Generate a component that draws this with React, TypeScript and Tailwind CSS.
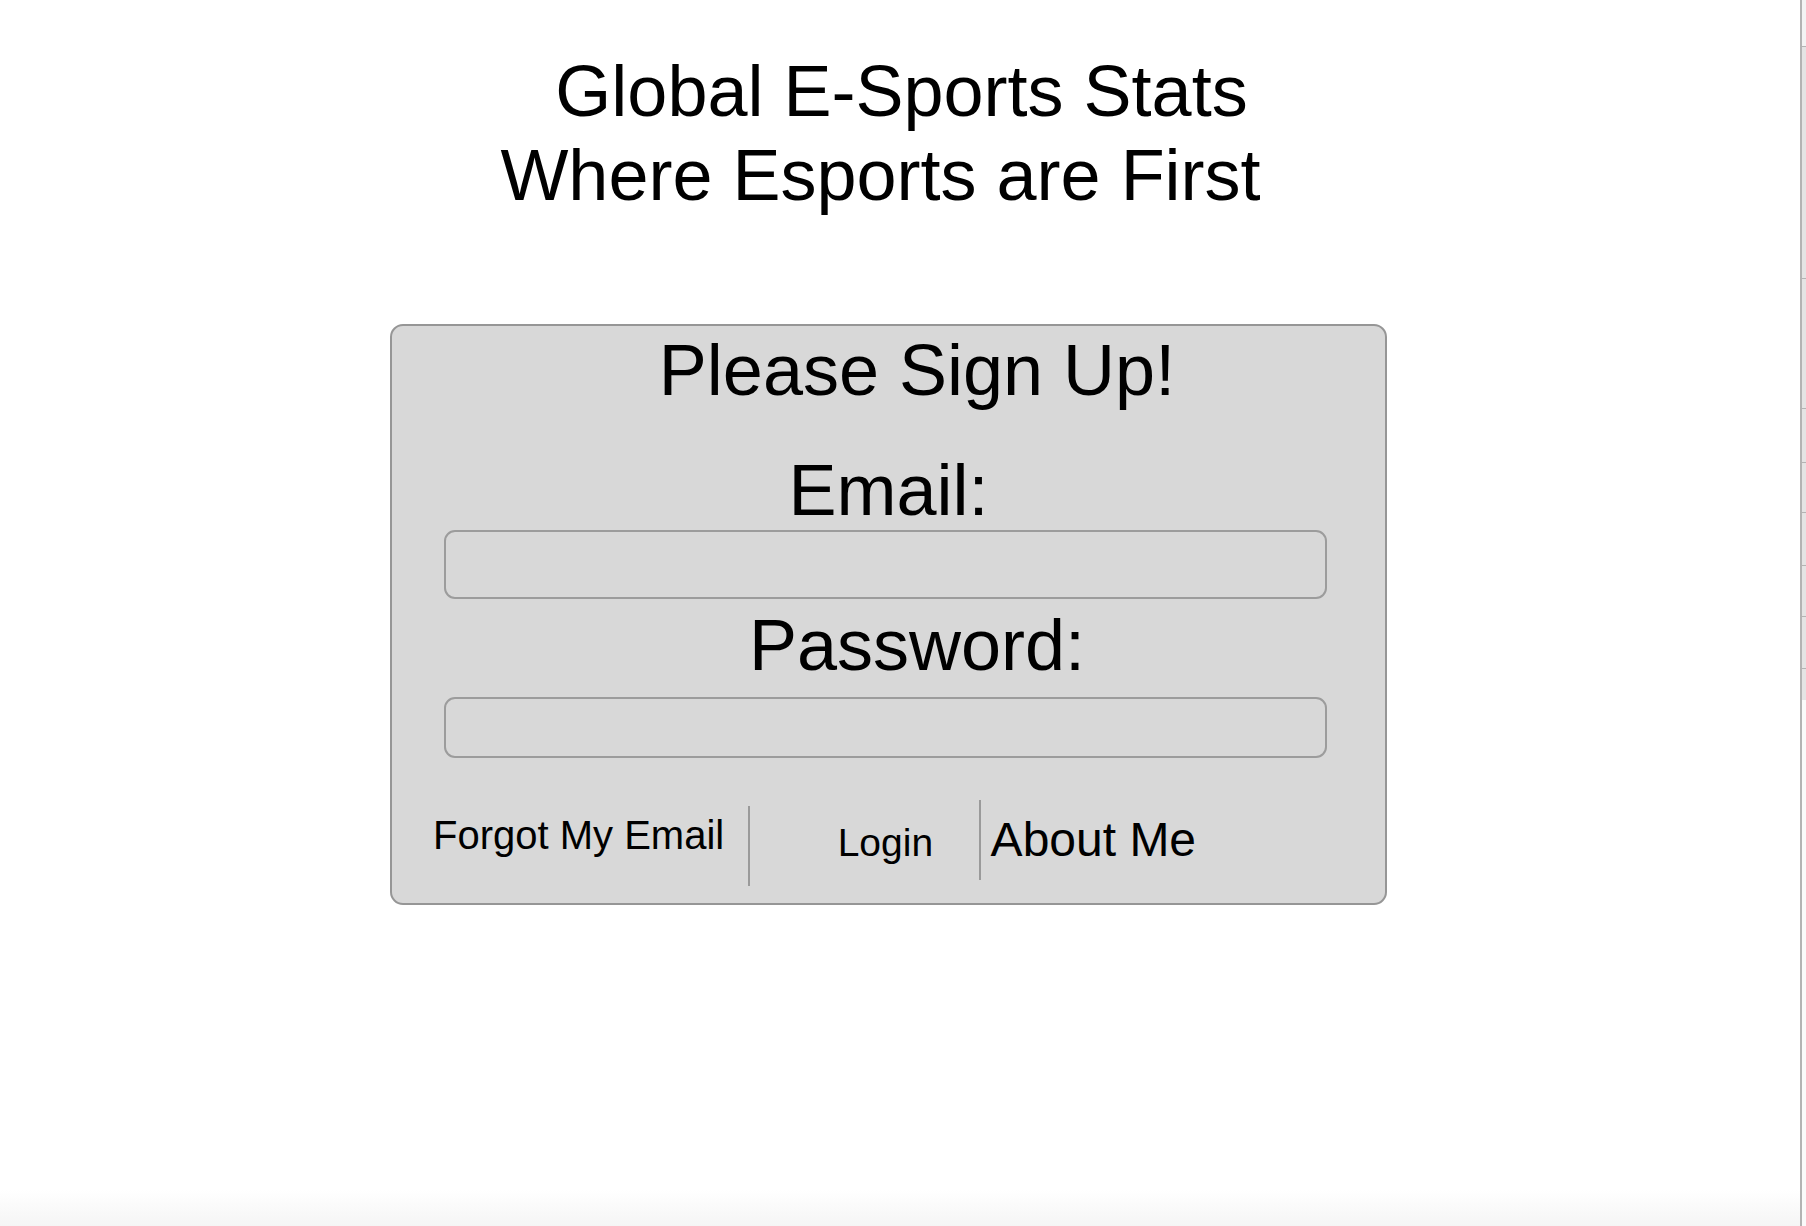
import React from "react";

export default function App() {
  const ticks = [46, 278, 408, 462, 512, 565, 616, 668];
  return (
    <div className="flex w-[1806px] h-[1226px] bg-white text-black font-['Liberation_Sans','Helvetica',Arial,sans-serif] overflow-hidden">
      <div className="flex flex-col w-[1800px] h-full">
        <header className="pt-[49px] text-[72px] leading-[84px] text-center">
          <div className="pl-[3px]">Global E-Sports Stats</div>
          <div className="pr-[39px]">Where Esports are First</div>
        </header>

        <div className="mt-[107px] ml-[390px] w-[997px] h-[581px] bg-[#d8d8d8] border-2 border-[#969696] rounded-[13px] flex flex-col">
          <div className="mt-[2px] pl-[57px] text-center text-[72px] leading-[84px]">Please Sign Up!</div>
          <div className="mt-[42px] text-center text-[72px] leading-[72px]">Email:</div>
          <div className="mt-[4px] ml-[52px] w-[883px] h-[69px] rounded-[11px] border-2 border-[#9c9c9c] bg-[#d8d8d8]" />
          <div className="mt-[10px] pl-[57px] text-center text-[72px] leading-[72px]">Password:</div>
          <div className="mt-[16px] ml-[52px] w-[883px] h-[61px] rounded-[11px] border-2 border-[#9c9c9c] bg-[#d8d8d8]" />
          <div className="mt-[41px] flex items-start">
            <div className="ml-[41px] mt-[16px] text-[40px] leading-[40px] whitespace-nowrap">Forgot My Email</div>
            <div className="ml-[24px] mt-[7px] w-[1.5px] h-[80px] bg-[#9a9a9a]" />
            <div className="ml-[88px] mt-[24px] text-[39px] leading-[40px] whitespace-nowrap">Login</div>
            <div className="ml-[46px] mt-[1px] w-[1.5px] h-[80px] bg-[#9a9a9a]" />
            <div className="ml-[10px] mt-[17px] text-[48px] leading-[48px] whitespace-nowrap">About Me</div>
          </div>
        </div>

        <div className="flex-1" />
        <div className="h-[36px] bg-gradient-to-b from-white to-[#f5f5f5]" />
      </div>

      <div className="flex h-full">
        <div className="w-[2px] h-full bg-[#b3b3b3]" />
        <div className="w-[4px] flex flex-col">
          <div className="h-[46px] bg-[#f3f3f3]" />
          <div className="relative h-[654px] bg-[#e4e4e4]">
            {ticks.map((t) => (
              <div
                key={t}
                className="absolute left-0 w-full h-[1px] bg-[#b3b3b3]"
                style={{ top: t - 46 }}
              />
            ))}
          </div>
          <div className="flex-1 bg-[#fafafa]" />
        </div>
      </div>
    </div>
  );
}
